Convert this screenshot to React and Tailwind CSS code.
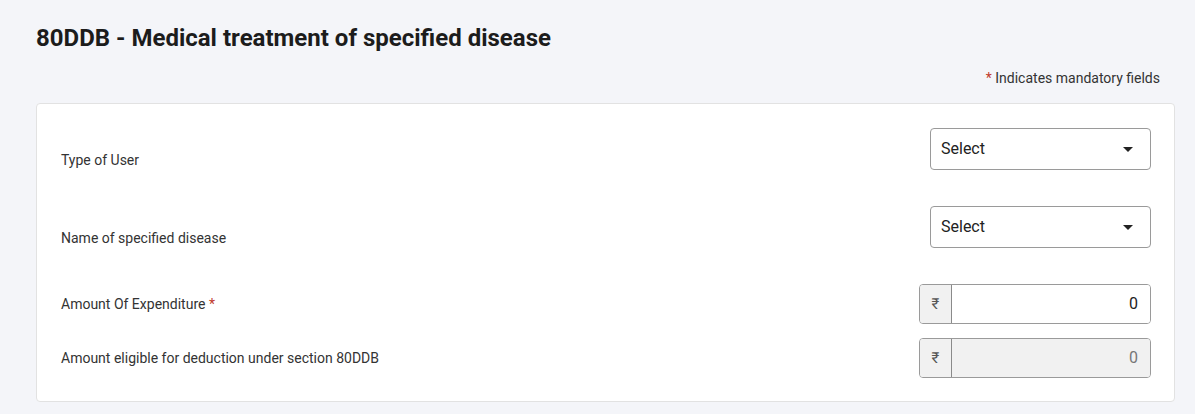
import React from 'react';

function Caret() {
  return (
    <svg width="10" height="5" viewBox="0 0 10 5" className="text-[#222]">
      <path d="M0 0 L10 0 L5 5 Z" fill="currentColor" />
    </svg>
  );
}

function SelectBox() {
  return (
    <div className="w-[221px] h-[42px] border border-[#9a9a9a] rounded-[4px] bg-white flex items-center justify-between pl-[10px] pr-[17px]">
      <span className="text-[16px] text-[#222] leading-none -mt-[1px]">Select</span>
      <Caret />
    </div>
  );
}

function AmountInput({ disabled }) {
  return (
    <div className="w-[232px] h-[40px] flex border border-[#9a9a9a] rounded-[4px] overflow-hidden">
      <div className="w-[32px] bg-[#f1f1f1] border-r border-[#8a8a8a] flex items-center justify-center text-[15px] text-[#555]">
        ₹
      </div>
      <div
        className={
          disabled
            ? 'flex-1 bg-[#f1f1f1] flex items-center justify-end pr-[12px] text-[16px] text-[#777]'
            : 'flex-1 bg-white flex items-center justify-end pr-[12px] text-[16px] text-[#222]'
        }
      >
        0
      </div>
    </div>
  );
}

export default function App() {
  return (
    <div
      className="w-[1195px] h-[414px] bg-[#f4f5f9] pl-[36px] pr-[20px] pt-[22px]"
      style={{ fontFamily: 'Roboto, "Liberation Sans", sans-serif' }}
    >
      <h1 className="text-[24px] font-bold text-[#1c1c1c] leading-[32px]">
        80DDB - Medical treatment of specified disease
      </h1>
      <div className="flex justify-end mt-[14px] pr-[15px]">
        <p className="text-[14px] text-[#333] leading-[20px]">
          <span className="text-[#c0392b]">*</span> Indicates mandatory fields
        </p>
      </div>
      <div className="mt-[15px] bg-white border border-[#e2e2e2] rounded-[4px] pl-[24px] pr-[23px] pt-[24px] pb-[23px]">
        <div className="flex items-end justify-between h-[42px]">
          <span className="text-[14px] text-[#333] leading-[20px]">Type of User</span>
          <SelectBox />
        </div>
        <div className="flex items-end justify-between h-[42px] mt-[36px]">
          <span className="text-[14px] text-[#333] leading-[20px]">Name of specified disease</span>
          <SelectBox />
        </div>
        <div className="flex items-center justify-between h-[40px] mt-[36px]">
          <span className="text-[14px] text-[#333] leading-[20px]">
            Amount Of Expenditure <span className="text-[#c0392b]">*</span>
          </span>
          <AmountInput />
        </div>
        <div className="flex items-center justify-between h-[40px] mt-[14px]">
          <span className="text-[14px] text-[#333] leading-[20px]">
            Amount eligible for deduction under section 80DDB
          </span>
          <AmountInput disabled />
        </div>
      </div>
    </div>
  );
}
